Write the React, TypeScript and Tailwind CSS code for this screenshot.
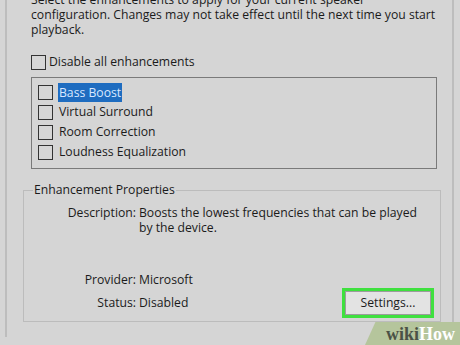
const font = "font-['Open_Sans','Noto_Sans',sans-serif]";

function Box() {
  return (
    <span className="block w-[15px] h-[15px] shrink-0 border border-[#333333] bg-[#d6d6d6]" />
  );
}

const items = ["Bass Boost", "Virtual Surround", "Room Correction", "Loudness Equalization"];

export default function App() {
  return (
    <div
      className={`relative w-[460px] h-[345px] overflow-hidden bg-[#d5d5d5] text-[12.2px] text-[#1b1b1b] ${font}`}
    >
      <div className="ml-[5px] w-[449px] h-full border-x-2 border-x-[#bdbdbd]">
        <p className="ml-[24px] mt-[-8px] w-[416px] leading-[15px]">
          Select the enhancements to apply for your current speaker
          <br />
          configuration. Changes may not take effect until the next time you start
          <br />
          playback.
        </p>

        <div className="ml-[24px] mt-[17px] flex items-center gap-[3px] h-[16px]">
          <Box />
          <span>Disable all enhancements</span>
        </div>

        <div className="ml-[24px] mt-[7px] w-[406px] h-[92px] border border-[#7a7a7a] pt-[4px] pl-[6px]">
          {items.map((t, i) => (
            <div key={t} className="flex items-center gap-[5px] h-[20px]">
              <Box />
              {i === 0 ? (
                <span className="bg-[#1e6cc0] text-[#d8e8ff] px-[1px] leading-[19px]">{t}</span>
              ) : (
                <span className="px-[1px]">{t}</span>
              )}
            </div>
          ))}
        </div>

        <fieldset className="ml-[16px] mt-[12px] w-[418px] h-[141px] border border-[#bcbcbc] pr-[6px] pl-0">
          <legend className="ml-[9px] px-[1px] leading-[18px]">Enhancement Properties</legend>
          <div className="grid grid-cols-[112px_1fr] gap-x-[3px] leading-[15px] mt-[6px]">
            <span className="text-right">Description:</span>
            <span className="w-[285px]">
              Boosts the lowest frequencies that can be played by the device.
            </span>
          </div>
          <div className="grid grid-cols-[112px_1fr_auto] grid-rows-[16px_30px] gap-x-[3px] items-center mt-[37px]">
            <span className="text-right">Provider:</span>
            <span className="col-span-2">Microsoft</span>
            <span className="text-right">Status:</span>
            <span>Disabled</span>
            <div className="border-[3px] border-[#3fe03f]">
              <button className={`block w-[86px] h-[24px] border border-[#9c9c9c] bg-[#e3e3e3] leading-[20px] ${font}`}>
                Settings...
              </button>
            </div>
          </div>
        </fieldset>
      </div>

      <div className="absolute right-0 bottom-0 h-[23px] w-[95px] bg-[#b5c59c] [clip-path:polygon(11%_0,100%_0,100%_100%,0_100%)] flex items-center justify-end pr-[5px] font-['Liberation_Serif',serif] font-bold text-[18px] leading-none">
        <span className="text-[#4b5146]">wiki</span>
        <span className="text-white">How</span>
      </div>
    </div>
  );
}
